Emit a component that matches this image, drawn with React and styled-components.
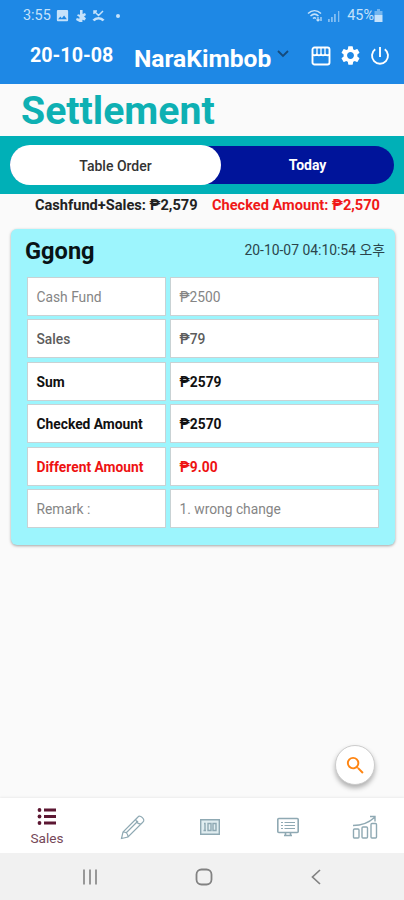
import React from 'react';
import styled, { createGlobalStyle, css } from 'styled-components';
import { MdSettings, MdSearch, MdImage } from 'react-icons/md';

const rows = [
  { label: 'Cash Fund', value: '₱2500', tone: 'light' },
  { label: 'Sales', value: '₱79', tone: 'medium' },
  { label: 'Sum', value: '₱2579', tone: 'strong' },
  { label: 'Checked Amount', value: '₱2570', tone: 'strong' },
  { label: 'Different Amount', value: '₱9.00', tone: 'alert' },
  { label: 'Remark :', value: '1. wrong change', tone: 'light' },
];

const tones = {
  light: css`
    color: #858585;
    font-weight: 400;
  `,
  medium: css`
    color: #5c5c5c;
    font-weight: 500;
  `,
  strong: css`
    color: #111;
    font-weight: 700;
  `,
  alert: css`
    color: #ee1212;
    font-weight: 700;
  `,
};

function StatusBar() {
  return (
    <Status>
      <StatusText>3:55</StatusText>
      <StatusIcons>
        <MdImage size={15} />
        <svg width="12" height="14" viewBox="0 0 12 14" fill="currentColor">
          <path d="M5 1h2.6v4L10 4l1 2-2 1.6 2 1.6-1.4 2.3-2.2-.7V13H4.6L1 11l.8-2 2.6.8V8L2 6.5l1-1.3 2 .6z" />
        </svg>
        <svg width="13" height="14" viewBox="0 0 13 14" fill="none" stroke="currentColor" strokeWidth="1.5">
          <path d="M2 2l4.5 4.5L11 2M2 5V2h3" />
          <path d="M1.5 11.5C4 8.5 9 8.5 11.5 11.5" strokeWidth="2.7" />
        </svg>
        <Dot />
      </StatusIcons>
      <Signals>
        <svg width="17" height="14" viewBox="0 0 17 14" fill="none" stroke="currentColor" strokeWidth="1.5">
          <path d="M1 4.5C5 .8 10 .8 14 4.5M3.5 7c2.5-2.3 5.5-2.3 8 0M6 9.5c1-1 2-1 3 0" />
          <path d="M11 8v4M9.5 10.500L11 12l1.500-1.500M14 12V8" strokeWidth="1.2" />
        </svg>
        <svg width="14" height="14" viewBox="0 0 14 14" fill="currentColor" opacity=".6">
          <path d="M1 10h1.8v3H1zM4 8h1.8v5H4zM7 5h1.8v8H7zM11 2h1.3v11H11z" />
        </svg>
      </Signals>
      <StatusText>45%</StatusText>
      <svg width="9" height="13" viewBox="0 0 9 13" fill="currentColor">
        <path d="M3 0h3v2h2.5v4H.5V2H3z" opacity=".5" />
        <path d="M.5 6h8v7h-8z" />
      </svg>
    </Status>
  );
}

function Header() {
  return (
    <HeaderRow>
      <HeaderDate>20-10-08</HeaderDate>
      <Store>NaraKimbob</Store>
      <Chevron width="12" height="8" viewBox="0 0 12 8" fill="none" stroke="#154a7c" strokeWidth="1.8">
        <path d="M1 1l5 5 5-5" />
      </Chevron>
      <Actions>
        <svg width="20" height="20" viewBox="0 0 20 20" fill="none" stroke="currentColor" strokeWidth="1.9">
          <rect x="1.5" y="1.5" width="17" height="17" rx="2" />
          <path d="M1.5 8.5q2 1.5 4.3 0q2.100 1.500 4.200 0q2.100 1.500 4.200 0q2.300 1.500 4.300 0" />
          <path d="M6 2v6M10 2v6M14 2v6" strokeWidth="1.3" />
        </svg>
        <MdSettings size={23} />
        <svg width="20" height="20" viewBox="0 0 20 20" fill="none" stroke="currentColor" strokeWidth="1.9">
          <path d="M10 1v10M5.2 3.3a8 8 0 1 0 9.6 0" />
        </svg>
      </Actions>
    </HeaderRow>
  );
}

function SettlementCard() {
  return (
    <Card>
      <CardHeader>
        <CardTitle>Ggong</CardTitle>
        <CardTime>20-10-07 04:10:54 오후</CardTime>
      </CardHeader>
      <Grid>
        {rows.map((row) => (
          <React.Fragment key={row.label}>
            <Cell $tone={row.tone}>{row.label}</Cell>
            <Cell $tone={row.tone}>{row.value}</Cell>
          </React.Fragment>
        ))}
      </Grid>
    </Card>
  );
}

function TabBar() {
  return (
    <Tabs>
      <Tab $active>
        <svg width="20" height="19" viewBox="0 0 20 19" fill="currentColor">
          <path d="M7 1.5h12v3H7zM7 8h12v3H7zM7 14.5h12v3H7z" />
          <circle cx="2.5" cy="3" r="1.9" />
          <circle cx="2.5" cy="9.5" r="1.9" />
          <circle cx="2.5" cy="16" r="1.9" />
        </svg>
        <TabLabel>Sales</TabLabel>
      </Tab>
      <Tab>
        <svg width="26" height="26" viewBox="0 0 26 26" fill="none" stroke="currentColor" strokeWidth="1.2">
          <path d="M1.5 24.5L3 18 18 3c2-3 8 3 5 5L8 23zM3 18c3 0 5 2 5 5M16 5c0 3 2 5 5 5M6 19L18 7" />
        </svg>
      </Tab>
      <Tab>
        <svg width="20" height="16" viewBox="0 0 20 16" fill="none" stroke="currentColor" strokeWidth="1.4">
          <path d="M.7.7h18.6v14.6H.7z" fill="#e0edf0" />
          <path d="M4 4.5h1v7M3.5 11.5H6M8 4.5h3v7H8zM13 4.5h3v7h-3z" />
        </svg>
      </Tab>
      <Tab>
        <svg width="22" height="20" viewBox="0 0 22 20" fill="none" stroke="currentColor" strokeWidth="1.6">
          <rect x=".8" y="1.5" width="20.4" height="14" rx="1" />
          <path d="M4 5.5h2M7.5 5.5H18M4 8.5h2M7.5 8.5H18M4 11.5h2M7.5 11.5H18" strokeWidth="1.1" />
          <path d="M8.500 16v2.5M13.5 16v2.5M7 18.5h8" />
        </svg>
      </Tab>
      <Tab>
        <svg width="26" height="24" viewBox="0 0 26 24" fill="none" stroke="currentColor" strokeWidth="1.4">
          <rect x="1.5" y="14" width="5.5" height="9" rx="1" />
          <rect x="10" y="12" width="5.5" height="11" rx="1" />
          <rect x="19" y="8.5" width="5.5" height="14.5" rx="1" />
          <path d="M1 10.5c8 0 15-2 21.5-8M18 1.5h5v5" />
        </svg>
      </Tab>
    </Tabs>
  );
}

function SystemNav() {
  return (
    <SystemBar>
      <svg width="18" height="18" viewBox="0 0 18 18" fill="none" stroke="currentColor" strokeWidth="1.6">
        <path d="M3 1.5v15M9 1.5v15M15 1.5v15" />
      </svg>
      <svg width="18" height="18" viewBox="0 0 18 18" fill="none" stroke="currentColor" strokeWidth="1.8">
        <rect x="1.5" y="1.5" width="15" height="15" rx="5" />
      </svg>
      <svg width="18" height="18" viewBox="0 0 18 18" fill="none" stroke="currentColor" strokeWidth="1.7">
        <path d="M12 2L4.5 9l7.5 7" />
      </svg>
    </SystemBar>
  );
}

export default function App() {
  return (
    <Screen>
      <GlobalStyle />
      <Top>
        <StatusBar />
        <Header />
      </Top>
      <PageTitle>Settlement</PageTitle>
      <SwitchBand>
        <Switch>
          <Selected>Table Order</Selected>
          <Option>Today</Option>
        </Switch>
      </SwitchBand>
      <Totals>
        <span>Cashfund+Sales: ₱2,579</span>
        <Checked>Checked Amount: ₱2,570</Checked>
      </Totals>
      <SettlementCard />
      <Fab>
        <MdSearch size={23} />
      </Fab>
      <TabBar />
      <SystemNav />
    </Screen>
  );
}

const GlobalStyle = createGlobalStyle`
  * {
    box-sizing: border-box;
  }
  body {
    margin: 0;
    font-family: Roboto, 'Noto Sans CJK KR', sans-serif;
  }
  svg {
    display: block;
    flex-shrink: 0;
  }
`;

const Screen = styled.div`
  display: flex;
  flex-direction: column;
  width: 404px;
  height: 900px;
  overflow: hidden;
  background: #fafafa;
`;

const Top = styled.header`
  height: 84px;
  flex-shrink: 0;
  background: #1e88e5;
  color: #fff;
`;

const Status = styled.div`
  display: flex;
  align-items: center;
  height: 31px;
  padding: 0 21px 0 23px;
  color: #c5e2fb;
`;

const StatusText = styled.span`
  font-size: 14.4px;
  line-height: 16px;
`;

const StatusIcons = styled.div`
  display: flex;
  align-items: center;
  gap: 5px;
  margin-left: 4px;
`;

const Dot = styled.span`
  width: 4px;
  height: 4px;
  margin-left: 6px;
  border-radius: 50%;
  background: currentColor;
`;

const Signals = styled.div`
  display: flex;
  gap: 3px;
  margin-left: auto;
  margin-right: 6px;
`;

const HeaderRow = styled.div`
  display: flex;
  align-items: center;
  height: 53px;
  padding: 0 14px 4px 30px;
`;

const HeaderDate = styled.div`
  width: 104px;
  font-size: 19.7px;
  font-weight: 700;
  line-height: 24px;
`;

const Store = styled.div`
  width: 138px;
  padding-top: 7px;
  font-size: 24.6px;
  font-weight: 700;
  line-height: 30px;
`;

const Chevron = styled.svg`
  margin: 0 0 4px 5px;
`;

const Actions = styled.div`
  display: flex;
  align-items: center;
  gap: 8px;
  margin-left: auto;
`;

const PageTitle = styled.h1`
  height: 52px;
  margin: 0;
  padding-left: 21px;
  flex-shrink: 0;
  color: #0eb0b3;
  font-size: 39.2px;
  font-weight: 700;
  line-height: 54px;
`;

const SwitchBand = styled.div`
  height: 58px;
  flex-shrink: 0;
  padding: 10px 10px 9px;
  background: #00b0b7;
`;

const Switch = styled.div`
  display: flex;
  align-items: center;
  height: 38px;
  border-radius: 20px;
  background: #00149a;
`;

const Selected = styled.div`
  width: 211px;
  height: 40px;
  border-radius: 20px;
  background: #fff;
  color: #333;
  font-size: 14px;
  font-weight: 500;
  line-height: 42px;
  text-align: center;
`;

const Option = styled.div`
  flex: 1;
  color: #fff;
  font-size: 14px;
  font-weight: 700;
  line-height: 40px;
  text-align: center;
`;

const Totals = styled.div`
  display: flex;
  justify-content: space-between;
  height: 35px;
  flex-shrink: 0;
  padding: 2px 24px 0 35px;
  color: #222;
  font-size: 14.6px;
  font-weight: 700;
  line-height: 19px;
  white-space: nowrap;
`;

const Checked = styled.span`
  color: #f01818;
`;

const Card = styled.section`
  height: 316px;
  flex-shrink: 0;
  margin: 0 9.5px 0 10.5px;
  border-radius: 6px;
  background: #9df5fd;
  box-shadow: 0 1px 3px rgba(0, 0, 0, 0.35);
`;

const CardHeader = styled.div`
  display: flex;
  justify-content: space-between;
  height: 48px;
  padding: 0 9.5px 0 14.5px;
`;

const CardTitle = styled.h2`
  margin: 0;
  color: #081316;
  font-size: 23.6px;
  font-weight: 700;
  line-height: 45px;
`;

const CardTime = styled.time`
  color: #2b454b;
  font-size: 13.9px;
  line-height: 43px;
  white-space: nowrap;
`;

const Grid = styled.div`
  display: grid;
  grid-template-columns: 139px 209px;
  grid-auto-rows: 39px;
  gap: 3.4px 4px;
  padding-left: 16px;
`;

const Cell = styled.div`
  padding-left: 9px;
  border: 1px solid #c9d2d4;
  background: #fff;
  font-size: 13.8px;
  line-height: 39px;
  white-space: nowrap;
  ${(props) => tones[props.$tone]}
`;

const Fab = styled.button`
  display: flex;
  align-items: center;
  justify-content: center;
  width: 40px;
  height: 40px;
  flex-shrink: 0;
  margin: auto 29px 13px auto;
  padding: 0;
  border: 1px solid #ccc;
  border-radius: 50%;
  background: #fff;
  color: #ff8512;
  box-shadow: 0 3px 5px rgba(0, 0, 0, 0.3);
`;

const Tabs = styled.nav`
  display: flex;
  height: 55px;
  flex-shrink: 0;
  background: #fff;
  box-shadow: 0 -1px 2px rgba(0, 0, 0, 0.06);
`;

const Tab = styled.div`
  display: flex;
  flex: ${(props) => (props.$active ? '0 0 94px' : '1')};
  flex-direction: column;
  align-items: center;
  justify-content: center;
  padding-top: 2px;
  color: ${(props) => (props.$active ? '#5c1732' : '#8fa9b3')};
`;

const TabLabel = styled.span`
  margin-top: 4px;
  color: #754758;
  font-size: 13.6px;
  line-height: 16px;
`;

const SystemBar = styled.div`
  display: flex;
  align-items: center;
  justify-content: space-between;
  height: 47px;
  flex-shrink: 0;
  padding: 1px 78px 0 81px;
  background: #f1f1f1;
  color: #828282;
`;
